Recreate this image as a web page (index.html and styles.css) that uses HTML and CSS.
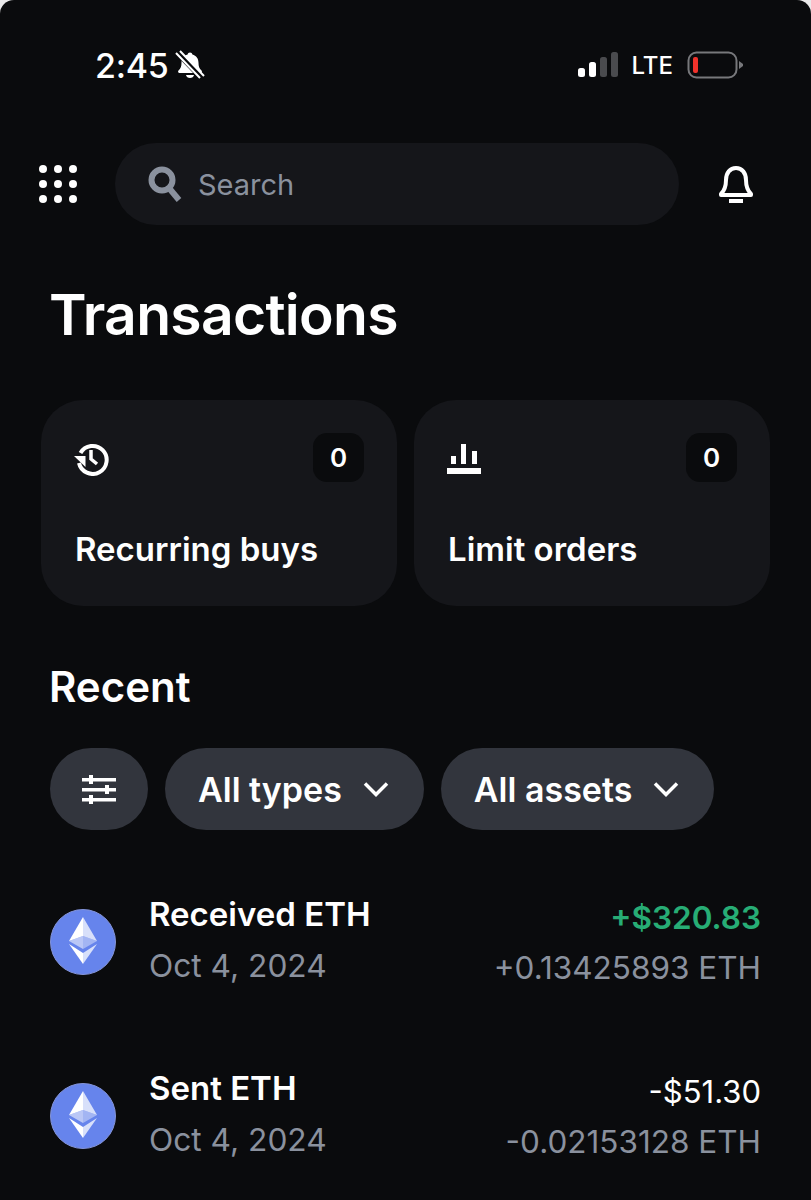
FILE: index.html
```html
<!DOCTYPE html>
<html lang="en">
<head>
  <meta charset="UTF-8">
  <meta name="viewport" content="width=device-width, initial-scale=1.0">
  <title>Transactions</title>
  <link rel="stylesheet" href="styles.css">
</head>
<body>
  <div class="screen">
    <!-- Status bar -->
    <div class="status-bar">
      <div class="status-left">
        <span class="time">2:45</span>
        <svg class="muted-bell" width="30" height="30" viewBox="0 0 30 30">
          <path d="M15 2.500c1.300 0 2.200 .9 2.400 2 3.900 1 6.100 4.200 6.100 8.200 0 3.600 .8 5.800 3 7.800 .9 .9 .4 2.500 -1 2.500H4.500c-1.400 0 -1.900 -1.600 -1 -2.500 2.200 -2 3 -4.200 3 -7.800 0 -4 2.200 -7.200 6.100 -8.200 .2 -1.100 1.100 -2 2.400 -2z" fill="#fff"/>
          <path d="M11 25h8c-.3 1.800 -2 3 -4 3s-3.700 -1.200 -4 -3z" fill="#fff"/>
          <path d="M2.500 2.500l24 25" stroke="#0a0b0d" stroke-width="6"/>
          <path d="M1 3l24 25M5 1l24 25" stroke="#fff" stroke-width="2"/>
        </svg>
      </div>
      <div class="status-right">
        <svg width="40" height="26" viewBox="0 0 40 26">
          <rect x="0" y="16" width="7" height="9" rx="2.500" fill="#fff"/>
          <rect x="11" y="10" width="7" height="15" rx="2.500" fill="#fff"/>
          <rect x="22" y="5" width="7" height="20" rx="2.500" fill="#4a4b4e"/>
          <rect x="33" y="0" width="7" height="25" rx="2.500" fill="#4a4b4e"/>
        </svg>
        <span class="lte">LTE</span>
        <svg width="56" height="28" viewBox="0 0 56 28">
          <rect x="1.500" y="1.500" width="48" height="25" rx="8" fill="none" stroke="#77787b" stroke-width="2"/>
          <rect x="6" y="6" width="5" height="16" rx="2" fill="#f0322b"/>
          <path d="M52 10l4 3v2l-4 3z" fill="#77787b"/>
        </svg>
      </div>
    </div>

    <!-- Search row -->
    <div class="top-row">
      <svg class="apps" width="40" height="40" viewBox="0 0 40 40" fill="#fff">
        <circle cx="5" cy="5" r="4"/><circle cx="20" cy="5" r="4"/><circle cx="35" cy="5" r="4"/>
        <circle cx="5" cy="20" r="4"/><circle cx="20" cy="20" r="4"/><circle cx="35" cy="20" r="4"/>
        <circle cx="5" cy="35" r="4"/><circle cx="20" cy="35" r="4"/><circle cx="35" cy="35" r="4"/>
      </svg>
      <div class="search">
        <svg width="34" height="36" viewBox="0 0 34 36" fill="none" stroke="#8a919e">
          <circle cx="14" cy="14" r="10.500" stroke-width="6"/>
          <path d="M21 22l10 12" stroke-width="6"/>
        </svg>
        <span>Search</span>
      </div>
      <svg class="bell" width="36" height="38" viewBox="0 0 36 38" fill="none" stroke="#fff" stroke-width="4">
        <path d="M3 29c4 -4 5 -8 5 -14 0 -7 4 -12 10 -12s10 5 10 12c0 6 1 10 5 14v1H3z" stroke-linejoin="round"/>
        <path d="M11 36h14" stroke-width="4"/>
      </svg>
    </div>

    <h1>Transactions</h1>

    <div class="cards">
      <div class="card">
        <div class="card-top">
          <svg width="36" height="36" viewBox="0 0 36 36" fill="none" stroke="#fff" stroke-width="4">
            <path d="M7.500 13a14 14 0 1 1 -1.500 10"/>
            <path d="M1 16h11.500v11z" fill="#fff" stroke="none"/>
            <path d="M18 10v9l6 5" stroke-width="3.500"/>
          </svg>
          <span class="count">0</span>
        </div>
        <div class="card-label">Recurring buys</div>
      </div>
      <div class="card">
        <div class="card-top">
          <svg width="36" height="36" viewBox="0 0 36 36" fill="#fff">
            <rect x="1" y="28" width="34" height="6"/>
            <rect x="5" y="16" width="5" height="8"/>
            <rect x="15" y="4" width="5" height="20"/>
            <rect x="26" y="11" width="5" height="13"/>
          </svg>
          <span class="count">0</span>
        </div>
        <div class="card-label">Limit orders</div>
      </div>
    </div>

    <h2>Recent</h2>

    <div class="filters">
      <div class="pill pill-icon">
        <svg width="34" height="30" viewBox="0 0 34 30" fill="#fff">
          <rect x="0" y="4" width="34" height="3.500"/><rect x="7" y="1" width="4" height="9"/>
          <rect x="0" y="14" width="34" height="3.500"/><rect x="23" y="11" width="4" height="9"/>
          <rect x="0" y="24" width="34" height="3.500"/><rect x="7" y="21" width="4" height="9"/>
        </svg>
      </div>
      <div class="pill">
        <span>All types</span>
        <svg width="26" height="16" viewBox="0 0 26 16" fill="none" stroke="#fff" stroke-width="3.500"><path d="M2 2.500l11 11 11 -11"/></svg>
      </div>
      <div class="pill">
        <span>All assets</span>
        <svg width="26" height="16" viewBox="0 0 26 16" fill="none" stroke="#fff" stroke-width="3.500"><path d="M2 2.500l11 11 11 -11"/></svg>
      </div>
    </div>

    <div class="tx-list">
      <div class="tx">
        <svg class="eth" width="66" height="66" viewBox="0 0 66 66">
          <circle cx="33" cy="33" r="32.500" fill="#6684ec" stroke="#8494d8"/>
          <path d="M33 8v19l14 5z" fill="#fff" fill-opacity=".75"/>
          <path d="M33 8L19 32l14 -5z" fill="#fff"/>
          <path d="M33 27l-14 5 14 8z" fill="#fff" fill-opacity=".55"/>
          <path d="M33 27v13l14 -8z" fill="#fff" fill-opacity=".4"/>
          <path d="M33 44v11l14 -20z" fill="#fff" fill-opacity=".75"/>
          <path d="M33 44L19 35l14 20z" fill="#fff"/>
        </svg>
        <div class="tx-info">
          <div class="tx-title">Received ETH</div>
          <div class="tx-date">Oct 4, 2024</div>
        </div>
        <div class="tx-amounts">
          <div class="tx-usd green">+$320.83</div>
          <div class="tx-eth">+0.13425893 ETH</div>
        </div>
      </div>
      <div class="tx">
        <svg class="eth" width="66" height="66" viewBox="0 0 66 66">
          <circle cx="33" cy="33" r="32.500" fill="#6684ec" stroke="#8494d8"/>
          <path d="M33 8v19l14 5z" fill="#fff" fill-opacity=".75"/>
          <path d="M33 8L19 32l14 -5z" fill="#fff"/>
          <path d="M33 27l-14 5 14 8z" fill="#fff" fill-opacity=".55"/>
          <path d="M33 27v13l14 -8z" fill="#fff" fill-opacity=".4"/>
          <path d="M33 44v11l14 -20z" fill="#fff" fill-opacity=".75"/>
          <path d="M33 44L19 35l14 20z" fill="#fff"/>
        </svg>
        <div class="tx-info">
          <div class="tx-title">Sent ETH</div>
          <div class="tx-date">Oct 4, 2024</div>
        </div>
        <div class="tx-amounts">
          <div class="tx-usd">-$51.30</div>
          <div class="tx-eth">-0.02153128 ETH</div>
        </div>
      </div>
    </div>
  </div>
</body>
</html>
```

FILE: styles.css
```css
html, body {
  margin: 0;
  height: 1200px;
  overflow: hidden;
  background-color: #e9e9ea;
}
body {
  font-family: 'Inter', 'Liberation Sans', sans-serif;
  color: #fff;
}
.screen {
  height: 1200px;
  box-sizing: border-box;
  background-color: #0a0b0d;
  border-radius: 14px 14px 0 0;
  overflow: hidden;
}
.status-bar {
  display: flex;
  justify-content: space-between;
  align-items: center;
  height: 40px;
  padding: 45px 68px 0 95px;
}
.status-left {
  display: flex;
  align-items: center;
  gap: 7px;
}
.time {
  font-size: 34px;
  font-weight: 500;
  letter-spacing: -0.3px;
}
.status-right {
  display: flex;
  align-items: center;
  gap: 14px;
}
.lte {
  font-size: 24px;
  font-weight: 500;
}
.top-row {
  display: flex;
  align-items: center;
  margin-top: 58px;
  padding: 0 57px 0 38px;
}
.search {
  flex: 1;
  height: 82px;
  display: flex;
  align-items: center;
  gap: 16px;
  margin: 0 39px 0 37px;
  padding-left: 33px;
  background-color: #15161a;
  border-radius: 41px;
  color: #8a919e;
  font-size: 29px;
}
h1 {
  margin: 60px 0 0 49px;
  font-size: 57px;
  line-height: 60px;
  font-weight: 600;
  letter-spacing: -0.7px;
}
.cards {
  display: flex;
  gap: 17px;
  margin-top: 55px;
  padding: 0 41px;
}
.card {
  flex: 1;
  height: 206px;
  box-sizing: border-box;
  padding: 33px 33px 0 34px;
  background-color: #15161a;
  border-radius: 42px;
}
.card-top {
  display: flex;
  justify-content: space-between;
  align-items: center;
}
.card-top svg {
  margin-left: -2px;
}
.count {
  width: 51px;
  height: 49px;
  display: flex;
  justify-content: center;
  align-items: center;
  background-color: #0a0b0d;
  border-radius: 14px;
  font-size: 26px;
  font-weight: 600;
}
.card-label {
  margin-top: 48px;
  font-size: 33px;
  line-height: 38px;
  font-weight: 600;
}
h2 {
  margin: 58px 0 0 49px;
  font-size: 42px;
  line-height: 46px;
  font-weight: 600;
}
.filters {
  display: flex;
  gap: 17px;
  margin-top: 38px;
  padding-left: 50px;
}
.pill {
  height: 82px;
  display: flex;
  align-items: center;
  gap: 21px;
  padding: 0 35px 0 33px;
  background-color: #32353d;
  border-radius: 41px;
  font-size: 34px;
  font-weight: 600;
}
.pill-icon {
  width: 98px;
  box-sizing: border-box;
  padding: 0;
  justify-content: center;
}
.tx-list {
  margin-top: 70px;
  padding: 0 50px;
}
.tx {
  height: 84px;
  display: flex;
  align-items: center;
  margin-bottom: 90px;
}
.eth {
  flex-shrink: 0;
}
.tx-info {
  flex: 1;
  margin-left: 33px;
  padding-bottom: 4px;
}
.tx-title {
  font-size: 33px;
  line-height: 38px;
  font-weight: 600;
}
.tx-date {
  margin-top: 14px;
  font-size: 31.7px;
  line-height: 38px;
  color: #8a919e;
}
.tx-amounts {
  padding-top: 2px;
  text-align: right;
}
.tx-usd {
  font-size: 31px;
  line-height: 38px;
}
.tx-usd.green {
  font-size: 31.5px;
  color: #27ad75;
  font-weight: 600;
}
.tx-eth {
  margin-top: 12px;
  font-size: 31.5px;
  line-height: 38px;
  color: #8a919e;
}
```
